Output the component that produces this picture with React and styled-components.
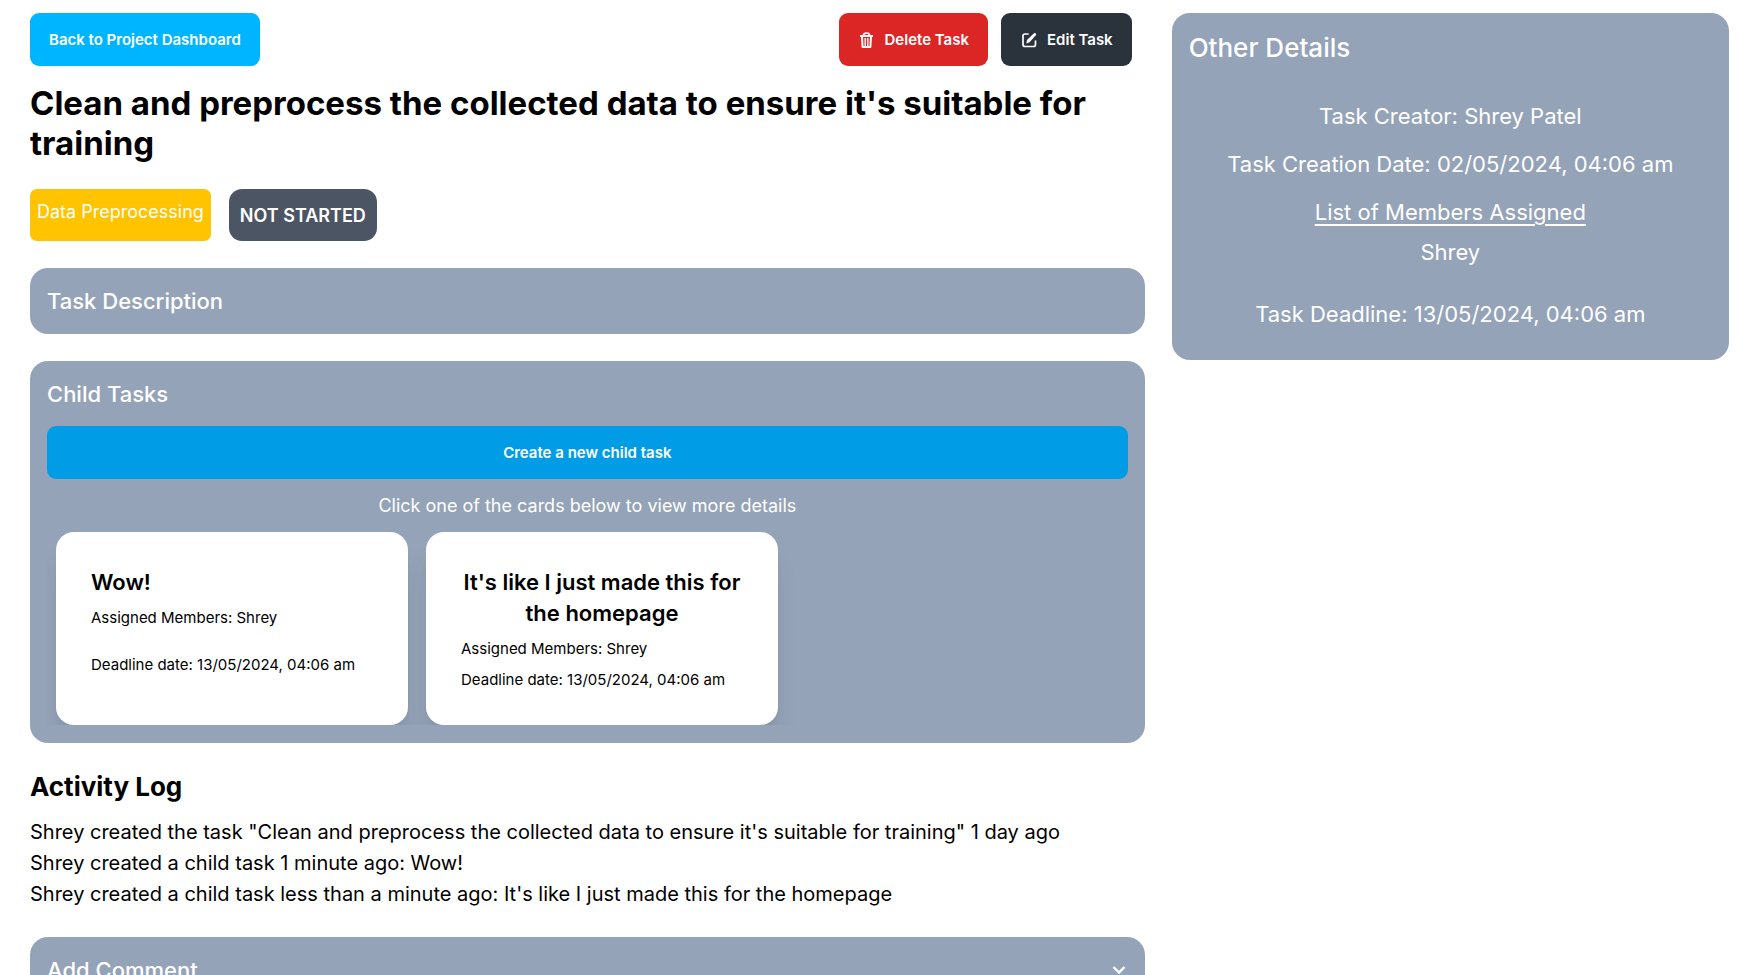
import React from "react";
import styled, { createGlobalStyle } from "styled-components";

const GlobalStyle = createGlobalStyle`
  *, *::before, *::after { box-sizing: border-box; }
  body { margin: 0; background: #fff; color: #000; font-family: Inter, "Liberation Sans", sans-serif; font-size: 18px; line-height: 27px; }
  h1, h2, h3, p, ul { margin: 0; padding: 0; }
  ul { list-style: none; }
  button { font-family: inherit; cursor: pointer; }
`;

const Page = styled.div`
  display: grid;
  grid-template-columns: minmax(0, 2fr) minmax(0, 1fr);
  align-items: start;
  gap: 27px;
  padding: 13px 10px 27px 30px;
`;

const Main = styled.main`
  display: flex;
  flex-direction: column;
  gap: 27px;
`;

const Intro = styled.header`
  display: flex;
  flex-direction: column;
`;

const Toolbar = styled.div`
  display: flex;
  justify-content: space-between;
  padding-right: 13px;
`;

const Actions = styled.div`
  display: flex;
  gap: 13px;
`;

const Button = styled.button`
  display: flex;
  align-items: center;
  justify-content: center;
  gap: 9px;
  width: ${(p) => (p.$block ? "100%" : "auto")};
  height: 53px;
  padding: 0 19px;
  border: 0;
  border-radius: 9px;
  background: ${(p) => p.$color};
  color: #fff;
  font-size: 15px;
  line-height: 16px;
  font-weight: 600;
`;

const Title = styled.h1`
  margin-top: 17px;
  font-size: 33px;
  line-height: 40px;
  font-weight: 700;
`;

const Tags = styled.div`
  display: flex;
  gap: 18px;
  height: 52px;
  margin-top: 26px;
`;

const Category = styled.span`
  padding: 9px 7px;
  border-radius: 7px;
  background: #ffc300;
  color: #fff;
`;

const Status = styled.span`
  display: flex;
  align-items: center;
  padding: 0 11px;
  border-radius: 13px;
  background: #4b5563;
  color: #fff;
  font-weight: 600;
`;

const Panel = styled.section`
  padding: 18px 17px;
  border-radius: 18px;
  background: #94a3b8;
  color: #fff;
`;

const PanelTitle = styled.h2`
  font-size: 22px;
  line-height: 30px;
  font-weight: 500;
`;

const PanelToggle = styled.button`
  display: flex;
  align-items: center;
  justify-content: space-between;
  width: 100%;
  padding: 0;
  border: 0;
  background: none;
  color: #fff;
`;

const ChildTasks = styled.div`
  display: flex;
  flex-direction: column;
  align-items: center;
  gap: 13px;
  margin-top: 17px;
`;

const CardRow = styled.div`
  display: flex;
  gap: 18px;
  width: 100%;
  padding: 0 9px;
  overflow: hidden;
`;

const Card = styled.article`
  display: flex;
  flex-direction: column;
  gap: 9px;
  flex: 0 0 352px;
  padding: 35px 35px 34px;
  border-radius: 18px;
  background: #fff;
  color: #000;
  box-shadow: 0 22px 28px -6px rgba(0, 0, 0, 0.1), 0 9px 11px -7px rgba(0, 0, 0, 0.1);
`;

const CardTitle = styled.h3`
  display: flex;
  text-align: center;
  font-size: 22px;
  line-height: 31px;
  font-weight: 600;
`;

const CardLine = styled.p`
  flex-grow: 1;
  font-size: 15px;
  line-height: 22px;
`;

const LogTitle = styled.h2`
  margin-bottom: 13px;
  font-size: 26px;
  line-height: 34px;
  font-weight: 700;
`;

const LogEntry = styled.li`
  font-size: 20px;
  line-height: 31px;
`;

const DetailsTitle = styled.h2`
  font-size: 26px;
  line-height: 34px;
  font-weight: 500;
`;

const Details = styled.div`
  display: flex;
  flex-direction: column;
  gap: 17px;
  padding: 36px 0 12px;
  text-align: center;
  font-size: 22px;
  line-height: 31px;
`;

const Members = styled.div`
  display: flex;
  flex-direction: column;
  gap: 9px;
  margin-bottom: 14px;
`;

const Underlined = styled.p`
  text-decoration: underline;
  text-underline-offset: 4px;
`;

const TrashIcon = () => (
  <svg width="18" height="18" viewBox="0 0 18 18" fill="none" stroke="currentColor" strokeWidth="2" strokeLinejoin="round" aria-hidden="true">
    <path d="M2 5h13" />
    <path strokeWidth="1.6" d="M5.500 4.500Q5.500 2 8.500 2t3 2.500" />
    <path d="M4 5.500l.6 10.500h7.800L13 5.500" />
    <path strokeWidth="1.4" d="M7.200 7v8M9.800 7v8" />
  </svg>
);

const EditIcon = () => (
  <svg width="18" height="18" viewBox="0 0 18 18" fill="none" stroke="currentColor" strokeWidth="1.7" strokeLinecap="round" aria-hidden="true">
    <path d="M8 3H5Q3 3 3 5v8.500q0 2 2 2h8.500q2 0 2-2V10" />
    <path fill="currentColor" stroke="none" d="M6.300 12.400l.7-3.500 6.700-6.500q1.100-.9 2-.1 1 .9.100 2L9.600 11.200z" />
  </svg>
);

const ChevronIcon = () => (
  <svg width="18" height="18" viewBox="0 0 18 18" fill="none" stroke="currentColor" strokeWidth="2.4" aria-hidden="true">
    <path d="M3.500 6l5.500 5.500L14.500 6" />
  </svg>
);

const childTasks = [
  { title: "Wow!", members: "Shrey", deadline: "13/05/2024, 04:06 am" },
  { title: "It's like I just made this for the homepage", members: "Shrey", deadline: "13/05/2024, 04:06 am" },
];

const activity = [
  'Shrey created the task "Clean and preprocess the collected data to ensure it\'s suitable for training" 1 day ago',
  "Shrey created a child task 1 minute ago: Wow!",
  "Shrey created a child task less than a minute ago: It's like I just made this for the homepage",
];

export default function App() {
  return (
    <>
      <GlobalStyle />
      <Page>
        <Main>
          <Intro>
            <Toolbar>
              <Button $color="#00b5ff">Back to Project Dashboard</Button>
              <Actions>
                <Button $color="#dc2626"><TrashIcon />Delete Task</Button>
                <Button $color="#2a323c"><EditIcon />Edit Task</Button>
              </Actions>
            </Toolbar>
            <Title>Clean and preprocess the collected data to ensure it's suitable for training</Title>
            <Tags>
              <Category>Data Preprocessing</Category>
              <Status>NOT STARTED</Status>
            </Tags>
          </Intro>
          <Panel>
            <PanelTitle>Task Description</PanelTitle>
          </Panel>
          <Panel>
            <PanelTitle>Child Tasks</PanelTitle>
            <ChildTasks>
              <Button $color="#009de6" $block>Create a new child task</Button>
              <p>Click one of the cards below to view more details</p>
              <CardRow>
                {childTasks.map((task) => (
                  <Card key={task.title}>
                    <CardTitle>{task.title}</CardTitle>
                    <CardLine>Assigned Members: {task.members}</CardLine>
                    <CardLine>Deadline date: {task.deadline}</CardLine>
                  </Card>
                ))}
              </CardRow>
            </ChildTasks>
          </Panel>
          <section>
            <LogTitle>Activity Log</LogTitle>
            <ul>
              {activity.map((entry) => (
                <LogEntry key={entry}>{entry}</LogEntry>
              ))}
            </ul>
          </section>
          <Panel>
            <PanelToggle aria-expanded="false">
              <PanelTitle as="span">Add Comment</PanelTitle>
              <ChevronIcon />
            </PanelToggle>
          </Panel>
        </Main>
        <Panel as="aside">
          <DetailsTitle>Other Details</DetailsTitle>
          <Details>
            <p>Task Creator: Shrey Patel</p>
            <p>Task Creation Date: 02/05/2024, 04:06 am</p>
            <Members>
              <Underlined>List of Members Assigned</Underlined>
              <p>Shrey</p>
            </Members>
            <p>Task Deadline: 13/05/2024, 04:06 am</p>
          </Details>
        </Panel>
      </Page>
    </>
  );
}
